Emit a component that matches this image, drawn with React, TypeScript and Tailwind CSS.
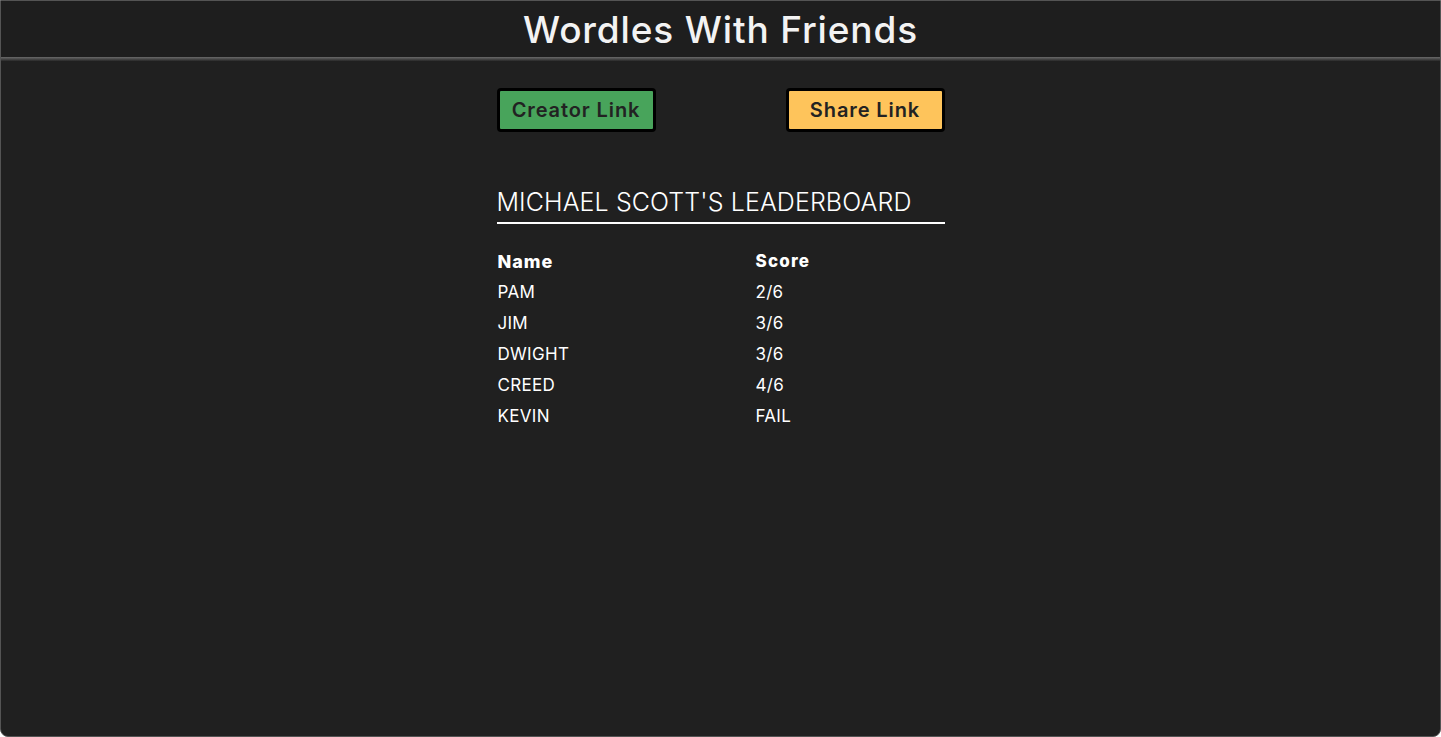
import React from 'react'

const players = [
  { name: 'PAM', score: '2/6' },
  { name: 'JIM', score: '3/6' },
  { name: 'DWIGHT', score: '3/6' },
  { name: 'CREED', score: '4/6' },
  { name: 'KEVIN', score: 'FAIL' },
]

const font = { fontFamily: 'Inter, "Liberation Sans", sans-serif' }

export default function App() {
  return (
    <div
      className="flex h-[737px] w-full flex-col overflow-hidden rounded-b-lg border border-[#545454] bg-[#202020] text-white"
      style={font}
    >
      {/* Header */}
      <header className="flex h-[56px] shrink-0 items-center justify-center bg-[#1e1e1e]">
        <h1 className="text-[37px] font-medium leading-none tracking-[0.85px] text-[#f3f3f3]">Wordles With Friends</h1>
      </header>
      <div className="h-[4px] shrink-0 bg-gradient-to-b from-[#6a6a6a] to-[#2a2a2a]" />

      {/* Content */}
      <main className="mx-auto flex w-[448px] flex-col pt-[27px]">
        <div className="flex justify-between">
          <button className="h-[44px] w-[159px] rounded-[4px] border-[3px] border-black bg-[#48a45b] text-[20px] font-semibold tracking-[0.9px] text-[#222]">
            Creator Link
          </button>
          <button className="h-[44px] w-[159px] rounded-[4px] border-[3px] border-black bg-[#fec45b] text-[20px] font-semibold tracking-[0.9px] text-[#222]">
            Share Link
          </button>
        </div>

        <h2 className="mt-[54px] border-b-2 border-white pb-[4px] text-[25px] font-light leading-[32px] tracking-[0.1px] text-white">
          MICHAEL SCOTT'S LEADERBOARD
        </h2>

        <div className="mt-[22px] grid grid-cols-[258px_1fr] pl-[1px] text-[17px] leading-[31px] tracking-[0.3px]">
          <div className="text-[18px] font-extrabold tracking-[1px]">Name</div>
          <div className="font-extrabold tracking-[1.2px]">Score</div>
          {players.map((p) => (
            <React.Fragment key={p.name}>
              <div>{p.name}</div>
              <div>{p.score}</div>
            </React.Fragment>
          ))}
        </div>
      </main>
    </div>
  )
}
